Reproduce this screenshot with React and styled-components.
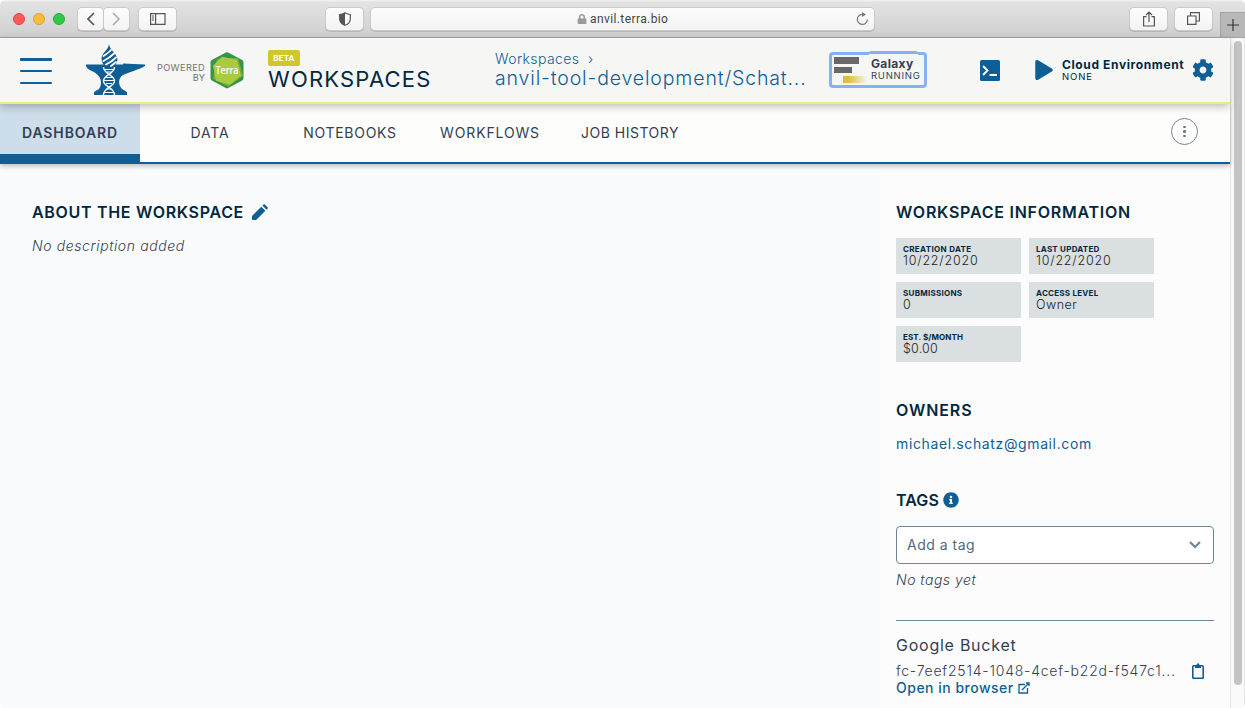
import React from 'react';
import styled, { createGlobalStyle } from 'styled-components';
import { FaPlay, FaCog, FaInfoCircle, FaLock } from 'react-icons/fa';

const blue = '#0f5f96';
const navy = '#00283f';
const slate = '#333f52';

const GlobalStyle = createGlobalStyle`
  * { box-sizing: border-box; }
  body { margin: 0; overflow: hidden; background: #fff; font-family: Inter, "Open Sans", sans-serif; color: ${slate}; }
`;

const Label = styled.span`
  display: block;
  white-space: nowrap;
  font-size: ${p => p.$size}px;
  line-height: ${p => p.$line || p.$size + 4}px;
  font-weight: ${p => p.$weight || 400};
  letter-spacing: ${p => p.$track || 0}px;
  color: ${p => p.$color || slate};
  font-style: ${p => (p.$italic ? 'italic' : 'normal')};
`;

const Window = styled.div`
  width: 1245px;
  height: 708px;
  display: flex;
  flex-direction: column;
  overflow: hidden;
  border-radius: 5px;
`;

const TitleBar = styled.div`
  height: 38px;
  flex: none;
  display: flex;
  align-items: center;
  padding-left: 13px;
  background: linear-gradient(#f4f4f4 0, #e3e3e3 2px, #cfcfcf 100%);
  border-bottom: 1px solid #a3a3a3;
`;
const Lights = styled.div`
  display: flex;
  gap: 8px;
  width: 65px;
`;
const Light = styled.i`
  width: 12px;
  height: 12px;
  border-radius: 50%;
  background: ${p => p.$fill};
  border: 1px solid ${p => p.$edge};
`;
const BarButton = styled.div`
  width: ${p => p.$w}px;
  height: 22px;
  margin-right: ${p => p.$after || 0}px;
  display: flex;
  align-items: center;
  justify-content: center;
  border-radius: 4px;
  background: linear-gradient(#fdfdfd, #f3f3f3);
  box-shadow: 0 0 0 1px #cacaca, 0 1px 0 1px #b5b5b5;
`;
const Address = styled(BarButton)`
  width: 503px;
  display: grid;
  grid-template-columns: 216px auto 1fr auto;
  justify-content: start;
  padding-right: 5px;
  > :first-child { justify-self: end; }
`;
const AddressText = styled.span`
  padding: 1px 0 0 3px;
  font: 12px Roboto, sans-serif;
  letter-spacing: 0.4px;
  color: #444;
`;
const NewTab = styled.div`
  align-self: flex-end;
  width: 25px;
  height: 25px;
  display: flex;
  align-items: center;
  justify-content: center;
  background: #b8b8b8;
  border: solid #a2a2a2;
  border-width: 1px 0 0 1px;
`;

const Viewport = styled.div`
  flex: 1;
  min-height: 0;
  display: flex;
`;
const Page = styled.div`
  width: 1230px;
  display: flex;
  flex-direction: column;
`;
const ScrollTrack = styled.div`
  width: 15px;
  padding: 3px 0 0 3px;
  background: #fafafa;
  border: solid #e6e6e6;
  border-width: 0 1px;
`;
const ScrollThumb = styled.div`
  width: 8px;
  height: 644px;
  border-radius: 4px;
  background: #c4c4c4;
`;

const Header = styled.header`
  height: 66px;
  flex: none;
  display: flex;
  align-items: center;
  padding-left: 20px;
  background: #f6f6f4;
  border-bottom: 2px solid #ecea83;
  box-shadow: 0 3px 8px rgba(0, 0, 0, 0.24);
  z-index: 2;
`;
const MenuIcon = styled.div`
  width: 32px;
  height: 26px;
  margin: 2px 33px 0 0;
  display: flex;
  flex-direction: column;
  justify-content: space-between;
  i { height: 2.5px; border-radius: 1px; background: ${blue}; }
`;
const Powered = styled.div`
  width: 49px;
  margin: 5px 5px 0 11px;
  display: flex;
  flex-direction: column;
  align-items: flex-end;
`;
const TitleBlock = styled.div`
  width: 227px;
  height: 64px;
  padding-top: 12px;
  margin-left: 24px;
`;
const Beta = styled.div`
  width: 32px;
  height: 16px;
  border-radius: 2px;
  text-align: center;
  background: #d0c72b;
`;
const Crumbs = styled.div`
  width: 334px;
  height: 64px;
  padding-top: 12px;
`;
const GalaxyButton = styled.div`
  position: relative;
  width: 98px;
  height: 36px;
  display: flex;
  align-items: center;
  gap: 3px;
  padding-left: 2px;
  border: 3px solid #87b1f2;
  border-radius: 4px;
  &::before {
    content: '';
    position: absolute;
    left: 37px;
    top: -4px;
    width: 49px;
    height: 3px;
    border-radius: 2px 2px 0 0;
    background: #87b1f2;
  }
  &::after {
    content: '';
    position: absolute;
    left: 37px;
    top: -1px;
    width: 49px;
    height: 1px;
    background: #f6f6f4;
  }
`;
const GalaxyText = styled.div`
  padding-bottom: 2px;
`;
const HeaderIcon = styled.div`
  display: flex;
  width: ${p => p.$w}px;
  margin-left: ${p => p.$left}px;
  color: ${blue};
`;
const CloudText = styled.div`
  width: 123px;
  margin-left: 9px;
`;

const Tabs = styled.nav`
  height: 60px;
  flex: none;
  display: flex;
  background: #fdfdfb;
  border-bottom: 2px solid ${blue};
  box-shadow: 0 2px 5px rgba(0, 0, 0, 0.26);
  z-index: 1;
`;
const Tab = styled.div`
  width: 140px;
  height: 58px;
  display: flex;
  justify-content: center;
  padding-top: 20px;
  background: ${p => (p.$active ? '#cddde9' : 'transparent')};
  border-bottom: ${p => (p.$active ? `8px solid ${blue}` : 'none')};
`;
const More = styled.div`
  width: 27px;
  height: 27px;
  margin: 14px 32px 0 auto;
  display: flex;
  flex-direction: column;
  align-items: center;
  justify-content: center;
  gap: 2px;
  border: 1.5px solid #7b8190;
  border-radius: 50%;
  i { width: 2.6px; height: 2.6px; border-radius: 50%; background: #6f7686; }
`;

const Body = styled.main`
  flex: 1;
  min-height: 0;
  display: flex;
`;
const About = styled.section`
  width: 880px;
  padding: 38px 32px;
  background: #fafbfd;
`;
const Side = styled.aside`
  flex: 1;
  padding: 38px 16px 0;
  background: #fcfcfc;
`;
const Heading = styled.div`
  display: flex;
  align-items: center;
  gap: ${p => p.$gap || 0}px;
  height: 20px;
  margin-bottom: ${p => p.$after}px;
  color: ${blue};
`;
const Cards = styled.div`
  display: grid;
  grid-template-columns: 125px 125px;
  grid-auto-rows: 36px;
  gap: 8px;
  margin-bottom: 38px;
`;
const Card = styled.div`
  padding: 6px 7px;
  background: #dadfe2;
`;
const OwnerList = styled.div`
  margin-bottom: 37px;
`;
const TagSelect = styled.div`
  height: 38px;
  display: flex;
  align-items: center;
  justify-content: space-between;
  margin-bottom: 7px;
  padding: 0 12px 0 10px;
  background: #fff;
  border: 1px solid #6d8697;
  border-radius: 4px;
`;
const Bucket = styled.div`
  margin-top: 31px;
  padding-top: 14px;
  border-top: 1px solid #6d8697;
`;
const BucketRow = styled.div`
  display: flex;
  align-items: center;
  justify-content: space-between;
  height: 18px;
  margin-top: 7px;
  margin-bottom: -1px;
  padding-right: 10px;
`;
const LinkRow = styled.div`
  display: flex;
  align-items: center;
  gap: 4px;
`;

const AnvilLogo = () => (
  <svg width="60" height="52" viewBox="0 0 60 52">
    <path d="M1 20.500H38V19.500L60 20.500V22C53 26 44 28 38 31C33 34 33 41 37 45L42 48V51H9V48L14 45C18 39 16 32 9 28C5 26 2 25 1 22Z" fill={blue} />
    <path d="M24 0C24.500 6 31.500 9 32.500 15C32.500 18 30.500 21 28.500 23H20.500C17.500 20 16.500 17 16.500 14C17.500 8 23.500 6 24 0Z" fill={blue} />
    <g fill="none" stroke="#fff" strokeWidth="1.800" strokeLinecap="round">
      <path d="M18.500 12C21.500 10 24.500 8 26 6M18.500 17C22.500 15 26.500 12 29 9.500M21 20.500C25.500 18.500 28.500 16 31 13.500M26 22C27.500 21 29.500 19 31 18" />
    </g>
    <g fill="none" stroke="#fff" strokeWidth="1.400">
      <path d="M18.500 23C18.500 30 29.500 31 29.500 37S18.500 43 18.500 51M29.500 23C29.500 30 18.500 31 18.500 37S29.500 43 29.500 51" />
      <path d="M19.500 25.500H28.500M21.500 28H26.500M21 33.500H27M19 36.500H29M21 39.500H27M22 45H26M19.500 48.500H28.500" strokeWidth="1.100" />
    </g>
  </svg>
);

const TerraLogo = () => (
  <svg width="34" height="38" viewBox="0 0 34 38">
    <g transform="translate(0 .8)">
      <path d="M17 3L31 10.500V26.500L17 34L3 26.500V10.500Z" fill="#36934a" stroke="#36934a" strokeWidth="5" strokeLinejoin="round" />
      <path d="M7 7L28 6L33 24L18 35L3 27Z" fill="#73ae43" />
      <path d="M12 5L27 8L31 24L20 33L6 29L3 14Z" fill="#aacb3e" />
      <text x="17" y="22.500" textAnchor="middle" textLength="23" lengthAdjust="spacingAndGlyphs" fontFamily="Open Sans, sans-serif" fontSize="10.500" fontWeight="600" fill="#fff">Terra</text>
    </g>
  </svg>
);

const GalaxyLogo = () => (
  <svg width="34" height="28" viewBox="0 0 34 28">
    <defs>
      <linearGradient id="fade">
        <stop offset="0.200" stopColor="#d9c233" />
        <stop offset="1" stopColor="#f6f6f4" />
      </linearGradient>
    </defs>
    <path d="M0 1H25V8H0ZM0 11H18V17H0Z" fill="#686966" />
    <path d="M9 20H33V27H9Z" fill="url(#fade)" />
  </svg>
);

const Pencil = () => (
  <svg width="16" height="16" viewBox="0 0 16 16" fill={blue}>
    <path d="M0 12L9.300 2.700L13.400 6.800L4.100 16H1Q0 16 0 15Z" />
    <path d="M10.400 1.600L11.500.5Q12.200-.1 12.900.5L15.600 3.200Q16.200 4 15.500 4.700L14.500 5.700Z" />
  </svg>
);

const Clipboard = () => (
  <svg width="12" height="16" viewBox="0 0 12 16">
    <rect x=".8" y="2.800" width="10.400" height="12.400" rx=".8" fill="none" stroke={blue} strokeWidth="1.600" />
    <path d="M3 2H4.500Q4.700.3 6 .3T7.500 2H9V5H3Z" fill={blue} />
  </svg>
);

const Stroke = ({ w, h, d, color = '#555', width = 1.2 }) => (
  <svg width={w} height={h} viewBox={`0 0 ${w} ${h}`} fill="none" stroke={color} strokeWidth={width}>
    <path d={d} />
  </svg>
);

const cards = [
  ['CREATION DATE', '10/22/2020', 0.35, 0.8],
  ['LAST UPDATED', '10/22/2020', 0.25, 0.8],
  ['SUBMISSIONS', '0', 0.27, 0],
  ['ACCESS LEVEL', 'Owner', 0.25, 0.5],
  ['EST. $/MONTH', '$0.00', 0.1, 0.2],
];

export default function App() {
  return (
    <Window>
      <GlobalStyle />
      <TitleBar>
        <Lights>
          <Light $fill="#fc5b57" $edge="#e2443f" />
          <Light $fill="#fdbc40" $edge="#dfa032" />
          <Light $fill="#34c84a" $edge="#24ab36" />
        </Lights>
        <BarButton $w={25} $after={1}><Stroke w={9} h={14} d="M8 1L2 7L8 13" width={1.7} /></BarButton>
        <BarButton $w={25} $after={10}><Stroke w={9} h={14} d="M1 1L7 7L1 13" color="#aaa" width={1.5} /></BarButton>
        <BarButton $w={37} $after={150}><Stroke w={16} h={12} d="M.6.6H15V11.400H.6ZM5.600.6V11.400M2 3H4M2 5H4M2 7H4" /></BarButton>
        <BarButton $w={37} $after={8}>
          <svg width="12" height="14" viewBox="0 0 12 14">
            <path d="M6 .7Q8.500 2.300 11.300 2.500V7Q11.300 11.300 6 13.300Q.7 11.300.7 7V2.500Q3.500 2.300 6 .7Z" fill="#fff" stroke="#555" strokeWidth="1.200" />
            <path d="M6 .7V13.300Q.7 11.300.7 7V2.500Q3.500 2.300 6 .7Z" fill="#555" />
          </svg>
        </BarButton>
        <Address $after={256}>
          <FaLock size={10} color="#9a9a9a" />
          <AddressText>anvil.terra.bio</AddressText>
          <span />
          <svg width="13" height="14" viewBox="0 0 13 14">
            <path d="M7 2.500A5 5 0 1 0 11.300 7.500" fill="none" stroke="#777" strokeWidth="1.200" />
            <path d="M6 0L10 2.500L6 5Z" fill="#777" />
          </svg>
        </Address>
        <BarButton $w={37} $after={8}><Stroke w={12} h={16} d="M3.500 5.600H.6V15H11.400V5.600H8.500M6 11V1.500M3 4L6 1L9 4" /></BarButton>
        <BarButton $w={37} $after={8}><Stroke w={13} h={13} d="M.6 4H9V12.400H.6ZM3.500 4V.6H12.400V9H9" /></BarButton>
        <NewTab><Stroke w={12} h={12} d="M6 0V12M0 6H12" color="#333" /></NewTab>
      </TitleBar>
      <Viewport>
        <Page>
          <Header>
            <MenuIcon><i /><i /><i /></MenuIcon>
            <AnvilLogo />
            <Powered>
              <Label $size={9.2} $line={10} $color="#737373" $track={0.35}>POWERED</Label>
              <Label $size={9.2} $line={10} $color="#737373">BY</Label>
            </Powered>
            <TerraLogo />
            <TitleBlock>
              <Beta><Label $size={8} $line={16} $weight={700} $color="#fff" $track={0.2}>BETA</Label></Beta>
              <Label $size={22} $line={26} $weight={400} $color={navy} $track={1.2}>WORKSPACES</Label>
            </TitleBlock>
            <Crumbs>
              <Label $size={14} $line={18} $weight={300} $color={blue} $track={0.4}>Workspaces&nbsp; ›</Label>
              <Label $size={19.5} $line={20} $weight={300} $color={blue} $track={0.85}>anvil-tool-development/Schat...</Label>
            </Crumbs>
            <GalaxyButton>
              <GalaxyLogo />
              <GalaxyText>
                <Label $size={12} $line={13} $weight={700} $track={0.35}>Galaxy</Label>
                <Label $size={9.5} $line={11} $track={0.75}>RUNNING</Label>
              </GalaxyText>
            </GalaxyButton>
            <HeaderIcon $left={53} $w={20}>
              <svg width="20" height="21" viewBox="0 0 20 21">
                <rect width="20" height="21" rx="1.500" fill={blue} />
                <path d="M3 6L7.500 10.500L3 15M9.500 15H17" fill="none" stroke="#fff" strokeWidth="1.900" />
              </svg>
            </HeaderIcon>
            <HeaderIcon $left={35} $w={18}><FaPlay size={20} /></HeaderIcon>
            <CloudText>
              <Label $size={12} $line={13} $weight={700} $color={navy} $track={0.62}>Cloud Environment</Label>
              <Label $size={9.5} $line={11} $color={navy} $track={0.9}>NONE</Label>
            </CloudText>
            <HeaderIcon $left={7} $w={22}><FaCog size={22} /></HeaderIcon>
          </Header>
          <Tabs>
            <Tab $active><Label $size={14} $weight={600} $track={0.9}>DASHBOARD</Label></Tab>
            <Tab><Label $size={14} $track={0.8}>DATA</Label></Tab>
            <Tab><Label $size={14} $track={0.7}>NOTEBOOKS</Label></Tab>
            <Tab><Label $size={14} $track={0.85}>WORKFLOWS</Label></Tab>
            <Tab><Label $size={14} $track={0.5}>JOB HISTORY</Label></Tab>
            <More><i /><i /><i /></More>
          </Tabs>
          <Body>
            <About>
              <Heading $gap={8} $after={15}>
                <Label $size={16} $weight={600} $color={navy} $track={0.69}>ABOUT THE WORKSPACE</Label>
                <Pencil />
              </Heading>
              <Label $size={14} $italic $weight={300} $track={0.6}>No description added</Label>
            </About>
            <Side>
              <Heading $after={16}><Label $size={16} $weight={600} $color={navy} $track={0.76}>WORKSPACE INFORMATION</Label></Heading>
              <Cards>
                {cards.map(([name, value, nameTrack, valueTrack]) => (
                  <Card key={name}>
                    <Label $size={8} $line={10} $weight={700} $color={navy} $track={nameTrack}>{name}</Label>
                    <Label $size={12.5} $line={14} $weight={300} $color="#1a1d20" $track={valueTrack}>{value}</Label>
                  </Card>
                ))}
              </Cards>
              <Heading $after={15}><Label $size={16} $weight={600} $color={navy} $track={0.9}>OWNERS</Label></Heading>
              <OwnerList>
                <Label $size={14} $weight={400} $color={blue} $track={0.62}>michael.schatz@gmail.com</Label>
              </OwnerList>
              <Heading $gap={4} $after={16}>
                <Label $size={16} $weight={600} $color={navy} $track={0.1}>TAGS</Label>
                <FaInfoCircle size={16} />
              </Heading>
              <TagSelect>
                <Label $size={14} $color="#53697a" $track={0.5}>Add a tag</Label>
                <Stroke w={12} h={8} d="M1 1L6 6L11 1" color="#6d8697" width={2.2} />
              </TagSelect>
              <Label $size={14} $italic $weight={300} $track={0.5}>No tags yet</Label>
              <Bucket>
                <Label $size={16} $line={20} $track={0.75}>Google Bucket</Label>
                <BucketRow>
                  <Label $size={14} $weight={300} $track={0.78}>fc-7eef2514-1048-4cef-b22d-f547c1...</Label>
                  <Clipboard />
                </BucketRow>
                <LinkRow>
                  <Label $size={14} $weight={500} $color={blue} $track={0.5}>Open in browser</Label>
                  <Stroke w={12} h={12} d="M7 2.500H1V11H9.500V6M4 8L11 1M8 1H11V4" color={blue} width={1.3} />
                </LinkRow>
              </Bucket>
            </Side>
          </Body>
        </Page>
        <ScrollTrack><ScrollThumb /></ScrollTrack>
      </Viewport>
    </Window>
  );
}
